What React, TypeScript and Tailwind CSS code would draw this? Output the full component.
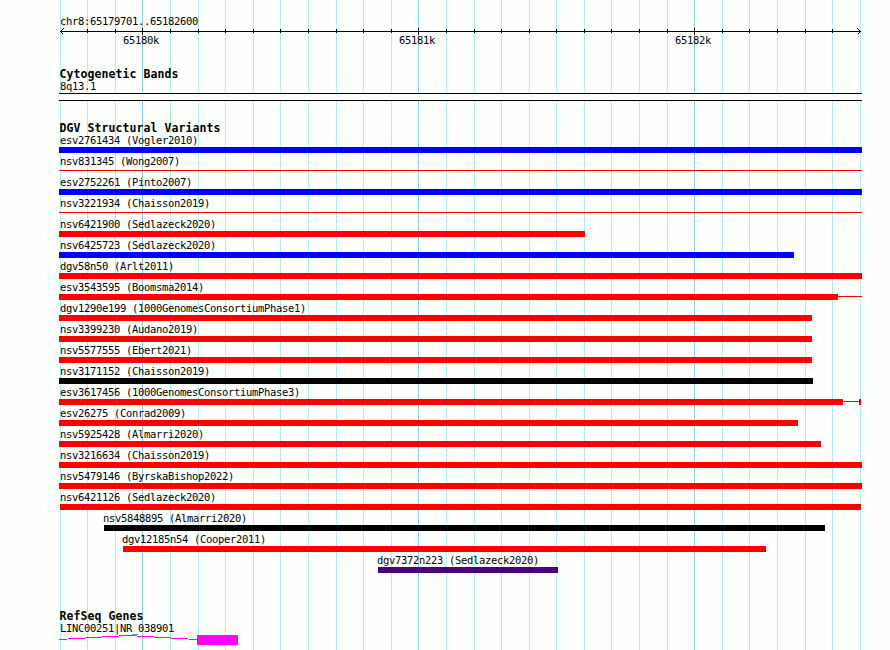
import clsx from "clsx";

const ticks = Array.from({ length: 30 }, (_, i) => ({
  x: Math.floor(60.22 + (i * 800) / 29),
  major: i % 10 === 3,
}));

const scaleLabels = ["65180k", "65181k", "65182k"];

type Variant = {
  name: string;
  start: number;
  end: number;
  color: string;
  thin?: boolean;
  tail?: number;
  cap?: boolean;
};

const red = "bg-[#ff0000]";
const blue = "bg-[#0000ff]";

const variants: Variant[] = [
  { name: "esv2761434 (Vogler2010)", start: 59, end: 862, color: blue },
  { name: "nsv831345 (Wong2007)", start: 59, end: 862, color: red, thin: true },
  { name: "esv2752261 (Pinto2007)", start: 59, end: 862, color: blue },
  { name: "nsv3221934 (Chaisson2019)", start: 59, end: 862, color: red, thin: true },
  { name: "nsv6421900 (Sedlazeck2020)", start: 59, end: 585, color: red },
  { name: "nsv6425723 (Sedlazeck2020)", start: 59, end: 794, color: blue },
  { name: "dgv58n50 (Arlt2011)", start: 59, end: 862, color: red },
  { name: "esv3543595 (Boomsma2014)", start: 59, end: 838, color: red, tail: 24 },
  { name: "dgv1290e199 (1000GenomesConsortiumPhase1)", start: 59, end: 812, color: red },
  { name: "nsv3399230 (Audano2019)", start: 59, end: 812, color: red },
  { name: "nsv5577555 (Ebert2021)", start: 59, end: 812, color: red },
  { name: "nsv3171152 (Chaisson2019)", start: 59, end: 813, color: "bg-black" },
  { name: "esv3617456 (1000GenomesConsortiumPhase3)", start: 59, end: 843, color: red, tail: 16, cap: true },
  { name: "esv26275 (Conrad2009)", start: 59, end: 798, color: red },
  { name: "nsv5925428 (Almarri2020)", start: 59, end: 821, color: red },
  { name: "nsv3216634 (Chaisson2019)", start: 59, end: 862, color: red },
  { name: "nsv5479146 (ByrskaBishop2022)", start: 59, end: 862, color: red },
  { name: "nsv6421126 (Sedlazeck2020)", start: 60, end: 861, color: red },
  { name: "nsv5848895 (Almarri2020)", start: 104, end: 825, color: "bg-black" },
  { name: "dgv12185n54 (Cooper2011)", start: 123, end: 766, color: red },
  { name: "dgv7372n223 (Sedlazeck2020)", start: 378, end: 558, color: "bg-[#4b0082]" },
];

const GridLines = () => (
  <svg
    width="890"
    height="650"
    shapeRendering="crispEdges"
    className="col-start-1 row-start-1"
  >
    {ticks.map(({ x, major }) => (
      <rect
        key={x}
        x={x}
        y={0}
        width={1}
        height={650}
        fill={major ? "#87ceeb" : "#afeeee"}
      />
    ))}
  </svg>
);

const Ruler = () => (
  <svg width="890" height="9" shapeRendering="crispEdges" className="block">
    <rect x={60} y={4} width={801} height={1} />
    {ticks.slice(1, -1).map(({ x, major }) => (
      <rect
        key={x}
        x={x}
        y={major ? 1 : 2}
        width={1}
        height={major ? 7 : 4}
      />
    ))}
    <path
      d="M63.5 1.5 L60.5 4.5 L63.5 7.5 M857.5 1.5 L860.5 4.5 L857.5 7.5"
      fill="none"
      stroke="black"
    />
  </svg>
);

const Title = ({ children }: { children: string }) => (
  <h2 className="h-3 pl-[59.5px] text-[11.5px] leading-3 font-bold tracking-[0.077px]">
    {children}
  </h2>
);

const Label = ({ children }: { children: string }) => (
  <p className="h-[13px] leading-[13px]">{children}</p>
);

const VariantRow = ({ variant }: { variant: Variant }) => {
  const { name, start, end, color, thin, tail, cap } = variant;
  return (
    <li className="h-[21px]">
      <div style={{ paddingLeft: Math.max(60, start - 1) }}>
        <Label>{name}</Label>
      </div>
      <div className="flex h-1.5" style={{ paddingLeft: start }}>
        <div
          className={clsx(color, thin ? "mt-0.5 h-px" : "h-1.5")}
          style={{ width: end - start }}
        />
        {tail && (
          <div className={clsx("mt-0.5 h-px", color)} style={{ width: tail }} />
        )}
        {cap && <div className={clsx("h-1.5 w-0.5", color)} />}
      </div>
    </li>
  );
};

export default function App() {
  return (
    <main className="grid h-[650px] w-[890px] overflow-hidden bg-[#fdfffc] font-['DejaVu_Sans_Mono',monospace] text-[10.5px] tracking-[-0.3215px] whitespace-pre text-black">
      <GridLines />
      <div className="col-start-1 row-start-1 flex flex-col">
        <header className="pt-[15px]">
          <div className="-mb-px pl-[60px]">
            <Label>chr8:65179701..65182600</Label>
          </div>
          <Ruler />
          <div className="-mt-0.5 flex gap-60 pl-[123px]">
            {scaleLabels.map((label) => (
              <div key={label} className="w-9">
                <Label>{label}</Label>
              </div>
            ))}
          </div>
        </header>

        <section className="mt-[21px]">
          <Title>Cytogenetic Bands</Title>
          <div className="pl-[60px]">
            <Label>8q13.1</Label>
          </div>
          <div className="ml-[59px] h-2 w-[803px] border-y border-black bg-[#fdfffc]" />
        </section>

        <section className="mt-[21px]">
          <Title>DGV Structural Variants</Title>
          <ul>
            {variants.map((variant) => (
              <VariantRow key={variant.name} variant={variant} />
            ))}
          </ul>
        </section>

        <section className="mt-[35px]">
          <Title>RefSeq Genes</Title>
          <div className="pl-[60px]">
            <Label>LINC00251|NR_038901</Label>
          </div>
          <svg
            width="890"
            height="10"
            shapeRendering="crispEdges"
            className="block"
          >
            <polyline
              points="59,4.5 128,0.5 197,4.5"
              fill="none"
              stroke="#ff00ff"
            />
            <rect x={197} y={0} width={41} height={10} fill="#ff00ff" />
          </svg>
        </section>
      </div>
    </main>
  );
}
